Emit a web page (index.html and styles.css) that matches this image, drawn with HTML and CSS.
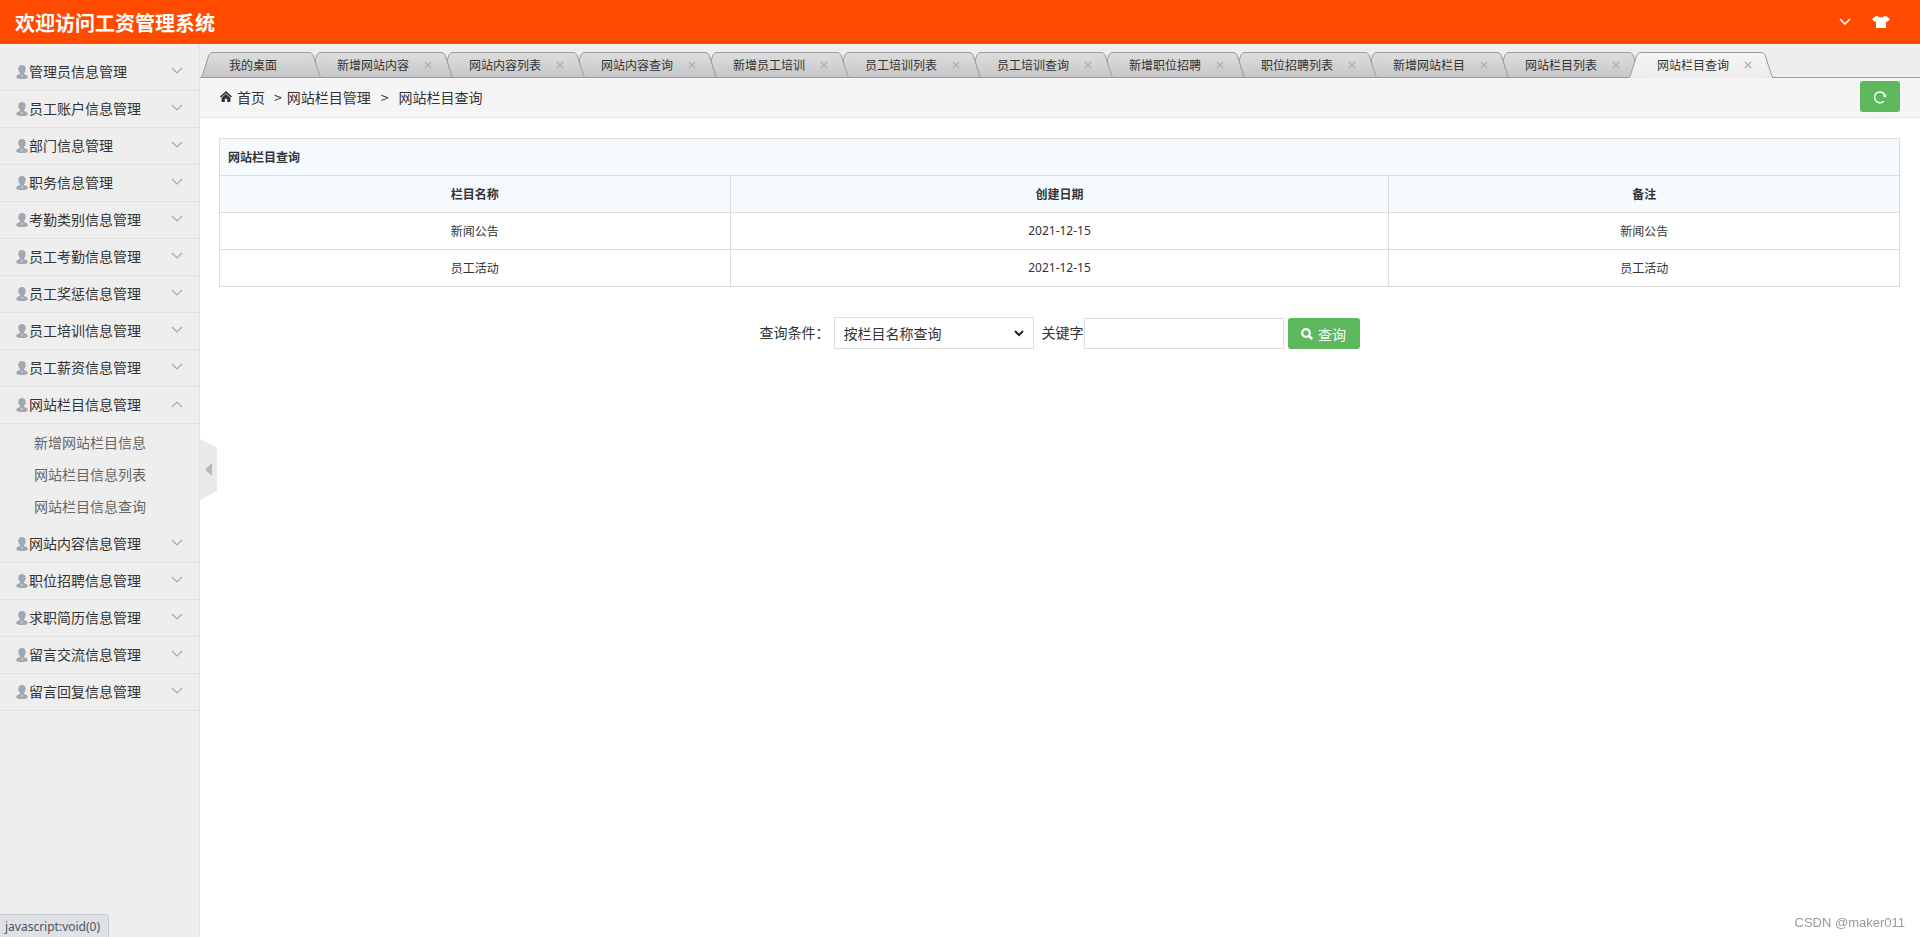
FILE: index.html
```html
<!DOCTYPE html>
<html lang="zh-CN">
<head>
<meta charset="utf-8">
<title>工资管理系统</title>
<link rel="stylesheet" href="styles.css">
</head>
<body>
<svg class="defs" aria-hidden="true">
  <defs>
    <linearGradient id="tabfill" x1="0" y1="0" x2="0" y2="26" gradientUnits="userSpaceOnUse"><stop offset="0" stop-color="#dcdedd"/><stop offset="1" stop-color="#c6c6c8"/></linearGradient>
    <linearGradient id="activefill" x1="0" y1="0" x2="0" y2="26" gradientUnits="userSpaceOnUse"><stop offset="0" stop-color="#f5f5f5"/><stop offset="1" stop-color="#ececee"/></linearGradient>
    <symbol id="user" viewBox="0 0 12 14"><path fill="#a2a8b2" d="M6 0C3.500 0 2.300 1.700 2.300 3.800c0 2 .7 3.500 1.700 4.400v.8C2 9.400.2 10.200.2 12.200c0 1.200 2 1.800 5.800 1.800s5.800-.6 5.800-1.800c0-2-1.800-2.800-3.800-3.200v-.8c1-.9 1.700-2.400 1.700-4.400C9.700 1.700 8.500 0 6 0z"/><path fill="#d0d3d8" d="M5 10h2l-1 3z"/></symbol>
    <symbol id="down" viewBox="0 0 12 8"><path fill="none" stroke="currentColor" stroke-width="1.200" d="M1 1l5 5 5-5"/></symbol>
    <symbol id="up" viewBox="0 0 12 8"><path fill="none" stroke="currentColor" stroke-width="1.200" d="M1 7l5-5 5 5"/></symbol>
    <symbol id="left" viewBox="0 0 14 26"><path fill="url(#tabfill)" d="M1 26C3 22 7 9 8.500 4 9.500 1.500 10.500.5 14 .5V26z"/><path fill="none" stroke="#999" d="M0 25.500h14M1.500 25.500C3 22 7 9 8.500 4 9.500 1.500 10.500.5 14 .5"/></symbol>
    <symbol id="right" viewBox="0 0 14 26"><path fill="url(#tabfill)" d="M13 26C11 22 7 9 5.500 4 4.500 1.500 3.500.5 0 .5V26z"/><path fill="none" stroke="#999" d="M0 25.500h14M12.500 25.500C11 22 7 9 5.500 4 4.500 1.500 3.500.5 0 .5"/></symbol>
    <symbol id="aleft" viewBox="0 0 14 26"><path fill="url(#activefill)" d="M1 26C3 22 7 9 8.500 4 9.500 1.500 10.500.5 14 .5V26z"/><path fill="none" stroke="#999" d="M0 25.500h1.500C3 22 7 9 8.500 4 9.500 1.500 10.500.5 14 .5"/></symbol>
    <symbol id="aright" viewBox="0 0 14 26"><path fill="url(#activefill)" d="M13 26C11 22 7 9 5.500 4 4.500 1.500 3.500.5 0 .5V26z"/><path fill="none" stroke="#999" d="M14 25.500h-1.500C11 22 7 9 5.500 4 4.500 1.500 3.500.5 0 .5"/></symbol>
    <symbol id="x" viewBox="0 0 8 8"><path fill="none" stroke="currentColor" stroke-width="1.200" d="M.8.8l6.400 6.400M7.200.8L.8 7.200"/></symbol>
  </defs>
</svg>
<header class="topbar">
  <h1 class="brand">欢迎访问工资管理系统</h1>
  <div class="tools">
    <button class="tool" type="button" aria-label="展开"><svg width="12" height="8" viewBox="0 0 12 8"><path fill="none" stroke="#fff" stroke-width="1.600" d="M1 1l5 5 5-5"/></svg></button>
    <button class="tool" type="button" aria-label="换肤"><svg width="18" height="12" viewBox="0 0 18 12"><path fill="#fff" d="M5.500 0C6.500 1.800 11.500 1.800 12.500 0c2.200.2 4.100 1 5.500 3.600L15.200 6l-1.200-.8V12H4V5.200L2.800 6 0 3.600C1.400 1 3.300.2 5.500 0z"/></svg></button>
  </div>
</header>
<div class="shell">
  <nav class="side" id="side"></nav>
  <main class="main">
    <button class="toggle" type="button" aria-label="收起菜单"><svg width="17" height="62" viewBox="0 0 17 62"><path fill="#e9e9e9" d="M0 1l16 8q1 .5 1 2v41q0 1-1 1.500L0 62z"/><path fill="#b8b8b8" d="M12 25v13l-7-6.500z"/></svg></button>
    <div class="tabs" id="tabs"></div>
    <div class="crumbs">
      <svg width="12" height="11" viewBox="0 0 12 11"><path fill="#333" d="M6 0l6 5.400-1 1.200L6 2.200 1 6.600 0 5.400zM6 3l4.400 3.800V11H7.200V7.800H4.800V11H1.600V6.800z"/></svg>
      <a href="#">首页</a><span class="sep">&gt;</span><span>网站栏目管理</span><span class="sep wide">&gt;</span><span>网站栏目查询</span>
      <button class="refresh" type="button" aria-label="刷新"><svg width="14" height="14" viewBox="0 0 14 14"><path fill="none" stroke="#fff" stroke-width="1.400" d="M10.800 11.200A5.400 5.400 0 1 1 12.200 6"/><path fill="#fff" d="M9.300 5.500h4.700l-1.900 2.300z"/></svg></button>
    </div>
    <section class="content">
      <table class="grid">
        <colgroup><col class="narrow"><col><col class="narrow"></colgroup>
        <thead>
          <tr><th class="title" colspan="3">网站栏目查询</th></tr>
          <tr><th>栏目名称</th><th>创建日期</th><th>备注</th></tr>
        </thead>
        <tbody>
          <tr><td>新闻公告</td><td class="date">2021-12-15</td><td>新闻公告</td></tr>
          <tr><td>员工活动</td><td class="date">2021-12-15</td><td>员工活动</td></tr>
        </tbody>
      </table>
      <form class="search">
        <label class="cond" for="field">查询条件：</label>
        <div class="picker">
          <select id="field"><option>按栏目名称查询</option></select>
          <svg width="10" height="7" viewBox="0 0 10 7"><path fill="none" stroke="#222" stroke-width="2" d="M1 1l4 4 4-4"/></svg>
        </div>
        <label class="kw" for="keyword">关键字</label>
        <input id="keyword" type="text">
        <button class="go" type="button"><svg width="12" height="12" viewBox="0 0 12 12"><circle cx="5" cy="5" r="3.800" fill="none" stroke="#fff" stroke-width="2.200"/><path stroke="#fff" stroke-width="2.600" d="M7.600 7.600l3.600 3.600"/></svg>查询</button>
      </form>
    </section>
  </main>
</div>
<div class="status">javascript:void(0)</div>
<div class="credit">CSDN @maker011</div>
<script src="app.js"></script>
</body>
</html>
```
FILE: styles.css
```css
* { box-sizing: border-box; }
body {
  margin: 0;
  min-height: 100vh;
  display: flex;
  flex-direction: column;
  color: #333;
  background: #fff;
  font: 14px/20px "Noto Sans CJK SC", sans-serif;
}
a { color: inherit; text-decoration: none; }
button { font: inherit; border: 0; padding: 0; background: none; cursor: pointer; }
svg { display: block; flex: none; }
.defs { position: absolute; width: 0; height: 0; }

.topbar {
  height: 44px;
  padding: 0 30px 0 15px;
  display: flex;
  align-items: center;
  justify-content: space-between;
  background: #ff4a00;
  color: #fff;
}
.brand { margin: 0; padding-top: 2px; font-size: 20px; line-height: 40px; font-weight: 700; }
.tools { display: flex; align-items: center; gap: 21px; }
.tool { color: #fff; }

.shell { flex: 1; display: flex; }
.side {
  width: 200px;
  flex: none;
  padding-top: 10px;
  background: #eee;
  border-right: 1px solid #e2e2e2;
}
.group {
  width: 100%;
  height: 37px;
  padding: 0 16px;
  display: flex;
  align-items: center;
  border-bottom: 1px solid #e2e2e2;
  color: #333;
}
.group span { flex: 1; padding: 0 0 2px 1px; text-align: left; }
.group .arrow { color: #a8a8a8; margin-bottom: 2px; }
.sub { margin: 0; padding: 2px 0 4px; list-style: none; }
.sub a { display: block; padding-left: 34px; line-height: 32px; color: #666; }

.main { flex: 1; min-width: 0; position: relative; }
.toggle { position: absolute; left: 0; top: 394px; }

.tabs {
  height: 34px;
  padding-top: 8px;
  display: flex;
  background: #eeeef0 linear-gradient(#999, #999) bottom / 100% 1px no-repeat;
}
.tab {
  position: relative;
  width: 146px;
  height: 26px;
  margin-left: -14px;
  display: flex;
  font-size: 12px;
  line-height: 26px;
}
.tab:first-child { width: 122px; margin-left: 0; }
.tab-mid {
  flex: 1;
  display: flex;
  align-items: center;
  gap: 15px;
  padding-left: 15px;
  border-top: 1px solid #999;
  border-bottom: 1px solid #999;
  background: linear-gradient(#dcdedd, #c6c6c8);
}
.tab-mid a { line-height: 24px; white-space: nowrap; }
.tab-x { color: #a3abb3; }
.tab.active .tab-mid { background: linear-gradient(#f5f5f5, #ececee); border-bottom-color: #ececee; }

.crumbs {
  height: 40px;
  padding: 0 20px 2px;
  display: flex;
  align-items: center;
  background: #f5f5f5;
  border-bottom: 1px solid #e5e5e5;
}
.crumbs a { margin-left: 5px; }
.sep { margin: 0 5px 0 9px; }
.sep.wide { margin: 0 10px; }
.refresh {
  width: 40px;
  height: 31px;
  margin-left: auto;
  display: grid;
  place-items: center;
  border-radius: 3px;
  background: #5eb95e;
}

.content { padding: 20px 20px 20px 19px; }
.grid { width: 100%; border-collapse: collapse; table-layout: fixed; font-size: 12px; }
.grid .narrow { width: 30.4%; }
.grid th, .grid td { height: 37px; padding: 8px; line-height: 20px; border: 1px solid #ddd; text-align: center; }
.grid th { background: #f5fafe; font-weight: 700; }
.grid .title { text-align: left; }
.grid .date { font-family: "Noto Sans", sans-serif; }

.search { margin-top: 28px; display: flex; justify-content: center; align-items: flex-end; }
.search label { line-height: 34px; }
.cond { margin-right: 4px; }
.picker { display: grid; align-items: center; }
.picker select, .picker svg { grid-area: 1 / 1; }
.picker svg { justify-self: end; margin-right: 10px; pointer-events: none; }
.search select, .search input { width: 200px; border: 1px solid #ddd; background: #fff; color: #333; font: inherit; }
.search select { height: 32px; padding: 0 9px; appearance: none; border-radius: 0; }
.search input { height: 31px; padding: 0 8px; }
.kw { margin-left: 8px; }
.go {
  width: 72px;
  height: 31px;
  margin-left: 4px;
  display: flex;
  align-items: center;
  justify-content: center;
  gap: 5px;
  border-radius: 3px;
  background: #5eb95e;
  color: #fff;
}

.status {
  position: fixed;
  left: 0;
  bottom: 0;
  padding: 2px 8px 0 5px;
  border: 1px solid #c8cacd;
  border-width: 1px 1px 0 0;
  border-radius: 0 4px 0 0;
  background: #dee1e6;
  color: #50545a;
  font: 12px/20px "Noto Sans", sans-serif;
}
.credit {
  position: fixed;
  right: 15px;
  bottom: 4px;
  color: #999;
  font: 13px/20px "Liberation Sans", sans-serif;
}
```
FILE: app.js
```js
const groups = ['管理员信息管理', '员工账户信息管理', '部门信息管理', '职务信息管理', '考勤类别信息管理', '员工考勤信息管理', '员工奖惩信息管理', '员工培训信息管理', '员工薪资信息管理', '网站栏目信息管理', '网站内容信息管理', '职位招聘信息管理', '求职简历信息管理', '留言交流信息管理', '留言回复信息管理'];
const open = '网站栏目信息管理';
const links = ['新增网站栏目信息', '网站栏目信息列表', '网站栏目信息查询'];
const icon = (id, w, h, cls = '') => `<svg class="${cls}" width="${w}" height="${h}"><use href="#${id}"/></svg>`;

document.getElementById('side').innerHTML = groups.map(name =>
  `<button class="group" type="button">${icon('user', 12, 14)}<span>${name}</span>${icon(name === open ? 'up' : 'down', 12, 8, 'arrow')}</button>` +
  (name === open ? `<ul class="sub">${links.map(l => `<li><a href="#">${l}</a></li>`).join('')}</ul>` : '')
).join('');

const tabs = ['我的桌面', '新增网站内容', '网站内容列表', '网站内容查询', '新增员工培训', '员工培训列表', '员工培训查询', '新增职位招聘', '职位招聘列表', '新增网站栏目', '网站栏目列表', '网站栏目查询'];
document.getElementById('tabs').innerHTML = tabs.map((name, i) => {
  const active = i === tabs.length - 1;
  const p = active ? 'a' : '';
  const close = i ? `<button class="tab-x" type="button" aria-label="关闭">${icon('x', 8, 8)}</button>` : '';
  return `<div class="tab${active ? ' active' : ''}" style="z-index:${active ? 20 : 12 - i}">${icon(p + 'left', 14, 26)}<div class="tab-mid"><a href="#">${name}</a>${close}</div>${icon(p + 'right', 14, 26)}</div>`;
}).join('');
```
